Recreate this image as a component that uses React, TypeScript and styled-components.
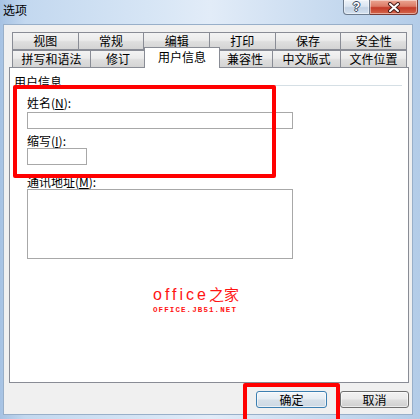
import React from "react";
import styled, { createGlobalStyle } from "styled-components";

const Global = createGlobalStyle`
  html, body { margin: 0; padding: 0; background: #fff; }
  body { font-family: "Noto Sans CJK SC", "Noto Sans", sans-serif; font-size: 12px; color: #000; }
  * { box-sizing: border-box; }
`;

const Window = styled.div`
  position: relative;
  width: 420px;
  height: 419px;
  overflow: hidden;
  display: flex;
  flex-direction: column;
  background: linear-gradient(to right, #a6c2e3 0%, #c3d8ef 6%, #d6e5f5 35%, #e2ecf8 50%, #cadcf0 75%, #b3cce8 100%);
`;

const TitleBar = styled.div`
  height: 24px;
  display: flex;
  align-items: flex-start;
  padding-left: 3px;
`;

const Title = styled.div`
  font-size: 12px;
  line-height: 14px;
  padding-top: 3px;
`;

const CaptionButtons = styled.div`
  margin-left: auto;
  margin-right: 2px;
  display: flex;
`;

const CaptionBtn = styled.div<{ $close?: boolean; $w: number }>`
  width: ${(p) => p.$w}px;
  height: 15px;
  display: flex;
  align-items: center;
  justify-content: center;
  border: 1px solid ${(p) => (p.$close ? "#7a3a33" : "#6d7b8d")};
  border-top: none;
  border-radius: ${(p) => (p.$close ? "0 0 4px 0" : "0 0 0 4px")};
  ${(p) => (p.$close ? "border-left: none;" : "")}
  background: ${(p) =>
    p.$close
      ? "linear-gradient(#eba593 0%, #dc7b66 45%, #c43a28 55%, #d4674c 100%)"
      : "linear-gradient(#eef3f9 0%, #dbe5f1 45%, #c3d2e4 55%, #d4e1ef 100%)"};
  box-shadow: inset 0 0 0 1px rgba(255, 255, 255, 0.45);
  color: #fff;
  font-family: "Liberation Sans", sans-serif;
  font-weight: bold;
  font-size: 12px;
  line-height: 12px;
  text-shadow: 0 0 1px #2b3a4f, 1px 0 0 #3c4c62, -1px 0 0 #3c4c62, 0 1px 0 #3c4c62, 0 -1px 0 #3c4c62;
`;

const Client = styled.div`
  margin-left: 3px;
  width: 410px;
  height: 391px;
  background: #f0f0f0;
  border: 1px solid #98afc9;
  display: flex;
  flex-direction: column;
  padding: 7px 0 6px 0;
`;

const TabArea = styled.div`
  margin: 0 5px 0 8px;
  display: flex;
  flex-direction: column;
`;

const TabRow = styled.div`
  display: flex;
  height: ${(p: { $h: number }) => p.$h}px;
`;

const Tab = styled.div<{ $w?: number; $active?: boolean; $back?: boolean }>`
  ${(p) => (p.$w ? `width: ${p.$w}px; flex: none;` : "flex: 1;")}
  border: 1px solid #898c95;
  ${(p) => (p.$back ? "" : "border-bottom: none;")}
  margin-left: -1px;
  &:first-child { margin-left: 0; }
  background: ${(p) => (p.$active ? "#fff" : "linear-gradient(#f3f3f3 0%, #ebebeb 45%, #dedede 55%, #d4d4d4 100%)")};
  display: flex;
  align-items: center;
  justify-content: center;
  font-size: 12px;
  line-height: 14px;
  white-space: nowrap;
  ${(p) =>
    p.$active
      ? `position: relative; z-index: 2; margin-top: -3px; height: 21px; margin-right: -2px; margin-left: -2px; padding-bottom: 3px;`
      : ""}
`;

const Panel = styled.div`
  position: relative;
  z-index: 1;
  margin: 0 3px 0 5px;
  height: 316px;
  background: #fff;
  border: 1px solid #898c95;
  padding: 7px 0 0 4px;
  display: flex;
  flex-direction: column;
`;

const GroupHeader = styled.div`
  display: flex;
  align-items: flex-end;
  line-height: 14px;
`;

const GroupLine = styled.div`
  flex: 1;
  height: 1px;
  background: #d5dfe5;
  margin: 0 6px 3px 4px;
`;

const Fields = styled.div`
  padding-left: 13px;
  display: flex;
  flex-direction: column;
  align-items: flex-start;
`;

const Label = styled.div<{ $mt: number }>`
  margin-top: ${(p) => p.$mt}px;
  line-height: 14px;
  height: 14px;
`;

const Input = styled.div<{ $w: number; $h: number; $mt?: number }>`
  width: ${(p) => p.$w}px;
  height: ${(p) => p.$h}px;
  margin-top: ${(p) => p.$mt ?? 0}px;
  border: 1px solid #a8a8a8;
  background: #fff;
`;

const Watermark = styled.div`
  margin: 25px 0 0 139px;
  color: #ff1414;
  display: flex;
  flex-direction: column;
  align-items: flex-start;
`;

const WmMain = styled.div`
  font-size: 16px;
  line-height: 18px;
  white-space: nowrap;
`;

const WmLatin = styled.span`
  font-family: "Liberation Sans", sans-serif;
  letter-spacing: 3px;
`;

const WmCjk = styled.span`
  font-size: 15px;
`;

const WmSub = styled.div`
  margin-top: 2px;
  font-family: "Liberation Mono", monospace;
  font-weight: bold;
  font-size: 7.5px;
  line-height: 8px;
  letter-spacing: 1.1px;
`;

const ButtonRow = styled.div`
  margin-top: 8px;
  display: flex;
  justify-content: flex-end;
  gap: 13px;
  padding-right: 3px;
`;

const Button = styled.div<{ $w: number; $default?: boolean }>`
  width: ${(p) => p.$w}px;
  height: 17px;
  border: 1px solid ${(p) => (p.$default ? "#3c7fb1" : "#707070")};
  border-radius: 3px;
  background: ${(p) =>
    p.$default
      ? "linear-gradient(#f2f6fa 0%, #e6edf3 45%, #d5dfe8 55%, #ccd8e3 100%)"
      : "linear-gradient(#f2f2f2 0%, #ebebeb 45%, #dddddd 55%, #cfcfcf 100%)"};
  box-shadow: inset 0 0 0 1px rgba(255, 255, 255, 0.6);
  display: flex;
  align-items: center;
  justify-content: center;
  font-size: 12px;
  line-height: 14px;
`;

const RedBox = styled.div<{ $l: number; $t: number; $w: number; $h: number }>`
  position: absolute;
  left: ${(p) => p.$l}px;
  top: ${(p) => p.$t}px;
  width: ${(p) => p.$w}px;
  height: ${(p) => p.$h}px;
  border: 4px solid #ff0000;
  border-radius: 2px;
  z-index: 5;
  pointer-events: none;
`;

const row1 = ["视图", "常规", "编辑", "打印", "保存", "安全性"];
const row2: { t: string; w: number; active?: boolean }[] = [
  { t: "拼写和语法", w: 79 },
  { t: "修订", w: 56 },
  { t: "用户信息", w: 76, active: true },
  { t: "兼容性", w: 56 },
  { t: "中文版式", w: 69 },
  { t: "文件位置", w: 67 },
];

export default function App() {
  return (
    <>
      <Global />
      <Window>
        <TitleBar>
          <Title>选项</Title>
          <CaptionButtons>
            <CaptionBtn $w={27}>?</CaptionBtn>
            <CaptionBtn $w={48} $close>
              <svg width="14" height="11" viewBox="0 0 14 11">
                <path d="M3 2 L11 9 M11 2 L3 9" stroke="#4a1e1a" strokeWidth="4" strokeLinecap="round" />
                <path d="M3 2 L11 9 M11 2 L3 9" stroke="#fff" strokeWidth="2" strokeLinecap="round" />
              </svg>
            </CaptionBtn>
          </CaptionButtons>
        </TitleBar>
        <Client>
          <TabArea>
            <TabRow $h={18}>
              {row1.map((t) => (
                <Tab key={t} $back>
                  {t}
                </Tab>
              ))}
            </TabRow>
            <TabRow $h={17}>
              {row2.map((r) => (
                <Tab key={r.t} $w={r.w} $active={r.active}>
                  {r.t}
                </Tab>
              ))}
            </TabRow>
          </TabArea>
          <Panel>
            <GroupHeader>
              <span>用户信息</span>
              <GroupLine />
            </GroupHeader>
            <Fields>
              <Label $mt={7}>
                姓名(<u>N</u>):
              </Label>
              <Input $w={266} $h={17} $mt={2} />
              <Label $mt={5}>
                缩写(<u>I</u>):
              </Label>
              <Input $w={60} $h={17} />
              <Label $mt={10}>
                通讯地址(<u>M</u>):
              </Label>
              <Input $w={266} $h={70} />
            </Fields>
            <Watermark>
              <WmMain>
                <WmLatin>office</WmLatin>
                <WmCjk>之家</WmCjk>
              </WmMain>
              <WmSub>OFFICE.JB51.NET</WmSub>
            </Watermark>
          </Panel>
          <ButtonRow>
            <Button $w={71} $default>
              确定
            </Button>
            <Button $w={69}>取消</Button>
          </ButtonRow>
        </Client>
        <RedBox $l={13} $t={85} $w={263} $h={93} />
        <RedBox $l={243} $t={383} $w={97} $h={44} />
      </Window>
    </>
  );
}
